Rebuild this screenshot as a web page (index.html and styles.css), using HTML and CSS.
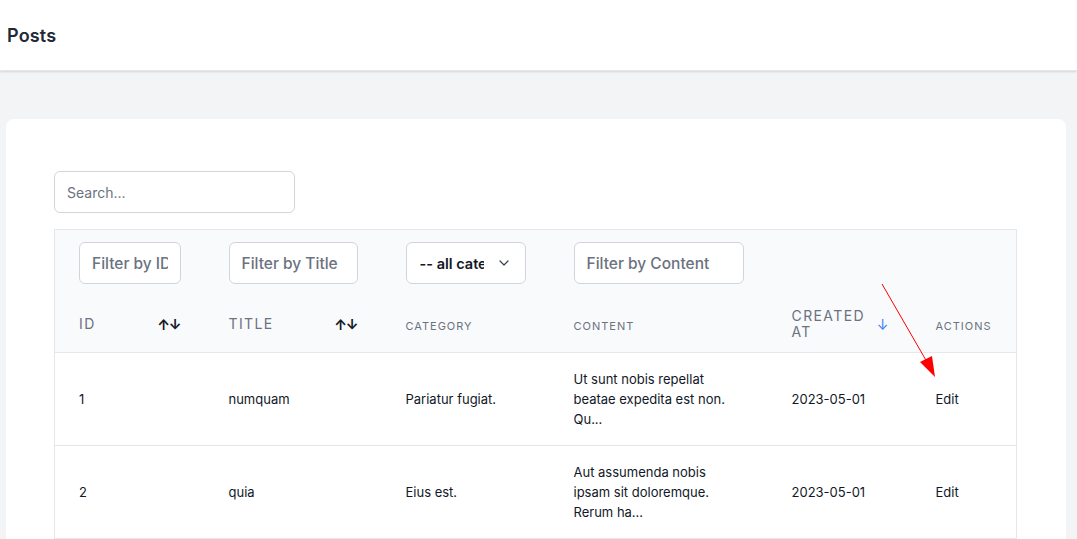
FILE: index.html
```html
<!DOCTYPE html>
<html>
<head>
<meta charset="utf-8">
<link rel="stylesheet" href="styles.css">
</head>
<body>
<header class="topbar"><h1 class="title">Posts</h1></header>
<main class="main">
  <section class="card">
    <input class="search" type="text" placeholder="Search...">
    <table class="tbl">
      <colgroup>
        <col style="width:150px"><col style="width:177px"><col style="width:168px"><col style="width:218px"><col style="width:144px"><col style="width:105px">
      </colgroup>
      <thead>
        <tr class="filters">
          <th><input class="finput" placeholder="Filter by ID"></th>
          <th><input class="finput" placeholder="Filter by Title"></th>
          <th><div class="select"><span class="selval">-- all categories</span><svg class="chev" width="16" height="16" viewBox="0 0 20 20"><path d="M5 7.5l5 5 5-5" fill="none" stroke="#374151" stroke-width="1.5" stroke-linecap="round" stroke-linejoin="round"/></svg></div></th>
          <th><input class="finput" placeholder="Filter by Content"></th>
          <th></th>
          <th></th>
        </tr>
        <tr class="labels">
          <th><div class="lab"><span class="big">ID</span><span class="sort">↑↓</span></div></th>
          <th><div class="lab"><span class="big">TITLE</span><span class="sort">↑↓</span></div></th>
          <th><span class="small">CATEGORY</span></th>
          <th><span class="small">CONTENT</span></th>
          <th><div class="lab"><span class="big">CREATED AT</span><span class="sort blue">↓</span></div></th>
          <th><span class="small">ACTIONS</span></th>
        </tr>
      </thead>
      <tbody>
        <tr>
          <td>1</td><td>numquam</td><td>Pariatur fugiat.</td>
          <td>Ut sunt nobis repellat beatae expedita est non. Qu...</td>
          <td>2023-05-01</td><td>Edit</td>
        </tr>
        <tr>
          <td>2</td><td>quia</td><td>Eius est.</td>
          <td>Aut assumenda nobis ipsam sit doloremque. Rerum ha...</td>
          <td>2023-05-01</td><td>Edit</td>
        </tr>
      </tbody>
    </table>
  </section>
</main>
<svg class="annot" width="1077" height="539" viewBox="0 0 1077 539">
  <line x1="882" y1="284" x2="927" y2="362" stroke="#ff0000" stroke-width="1"/>
  <polygon points="935,377 920,362 932,356" fill="#ff0000"/>
</svg>
</body>
</html>
```
FILE: styles.css
```css
html, body {
  margin: 0;
  padding: 0;
}
body {
  font-family: "Inter", "Liberation Sans", sans-serif;
  background: #f3f4f6;
  color: #111827;
  width: 1077px;
  height: 539px;
  overflow: hidden;
  position: relative;
}
.topbar {
  background: #fff;
  height: 71px;
  display: flex;
  align-items: center;
  padding-left: 7px;
  box-shadow: 0 1px 2px rgba(0,0,0,0.12);
  border-bottom: 1px solid #e5e7eb;
  box-sizing: border-box;
}
.title {
  margin: 0;
  font-size: 18px;
  font-weight: 600;
  color: #1f2937;
  letter-spacing: 0.01em;
}
.main {
  padding: 48px 11px 0 6px;
}
.card {
  background: #fff;
  border-radius: 8px;
  padding: 52px 48px 0 48px;
  height: 480px;
  box-sizing: border-box;
}
.search {
  display: block;
  width: 241px;
  height: 42px;
  box-sizing: border-box;
  border: 1px solid #d1d5db;
  border-radius: 6px;
  padding: 0 12px;
  font-family: inherit;
  font-size: 14px;
  color: #111827;
  margin-bottom: 16px;
  outline: none;
}
.search::placeholder { color: #6b7280; }
.tbl {
  border-collapse: collapse;
  table-layout: fixed;
  width: 963px;
  border: 1px solid #e5e7eb;
}
.tbl thead { background: #f9fafb; }
.filters th {
  padding: 12px 24px;
  text-align: left;
}
.finput {
  display: block;
  width: 100%;
  height: 42px;
  box-sizing: border-box;
  border: 1px solid #d1d5db;
  border-radius: 6px;
  padding: 0 12px;
  font-family: inherit;
  font-size: 15.5px;
  font-weight: 500;
  background: #fff;
  outline: none;
}
.finput::placeholder { color: #6b7280; }
.select {
  height: 42px;
  box-sizing: border-box;
  border: 1px solid #d1d5db;
  border-radius: 6px;
  background: #fff;
  display: flex;
  align-items: center;
  padding: 0 13px 0 13px;
  gap: 12px;
}
.selval {
  flex: 1;
  overflow: hidden;
  white-space: nowrap;
  font-size: 14.5px;
  font-weight: 600;
  color: #111827;
}
.chev { flex: none; }
.labels th {
  padding: 12px 24px;
  text-align: left;
  font-weight: 400;
  border-bottom: 1px solid #e5e7eb;
}
.lab {
  display: flex;
  justify-content: space-between;
  align-items: center;
}
.big {
  font-size: 14px;
  line-height: 16px;
  letter-spacing: 0.1em;
  color: #6b7280;
}
.small {
  font-size: 11px;
  letter-spacing: 0.09em;
  color: #6b7280;
}
.sort {
  font-size: 14px;
  font-weight: 700;
  color: #111827;
  letter-spacing: -1px;
}
.sort.blue { color: #3b82f6; font-weight: 400; }
.tbl td {
  padding: 16px 24px;
  font-size: 13px;
  line-height: 20px;
  color: #111827;
  border-bottom: 1px solid #e5e7eb;
  vertical-align: middle;
}
.annot {
  position: absolute;
  left: 0;
  top: 0;
  pointer-events: none;
}
```
